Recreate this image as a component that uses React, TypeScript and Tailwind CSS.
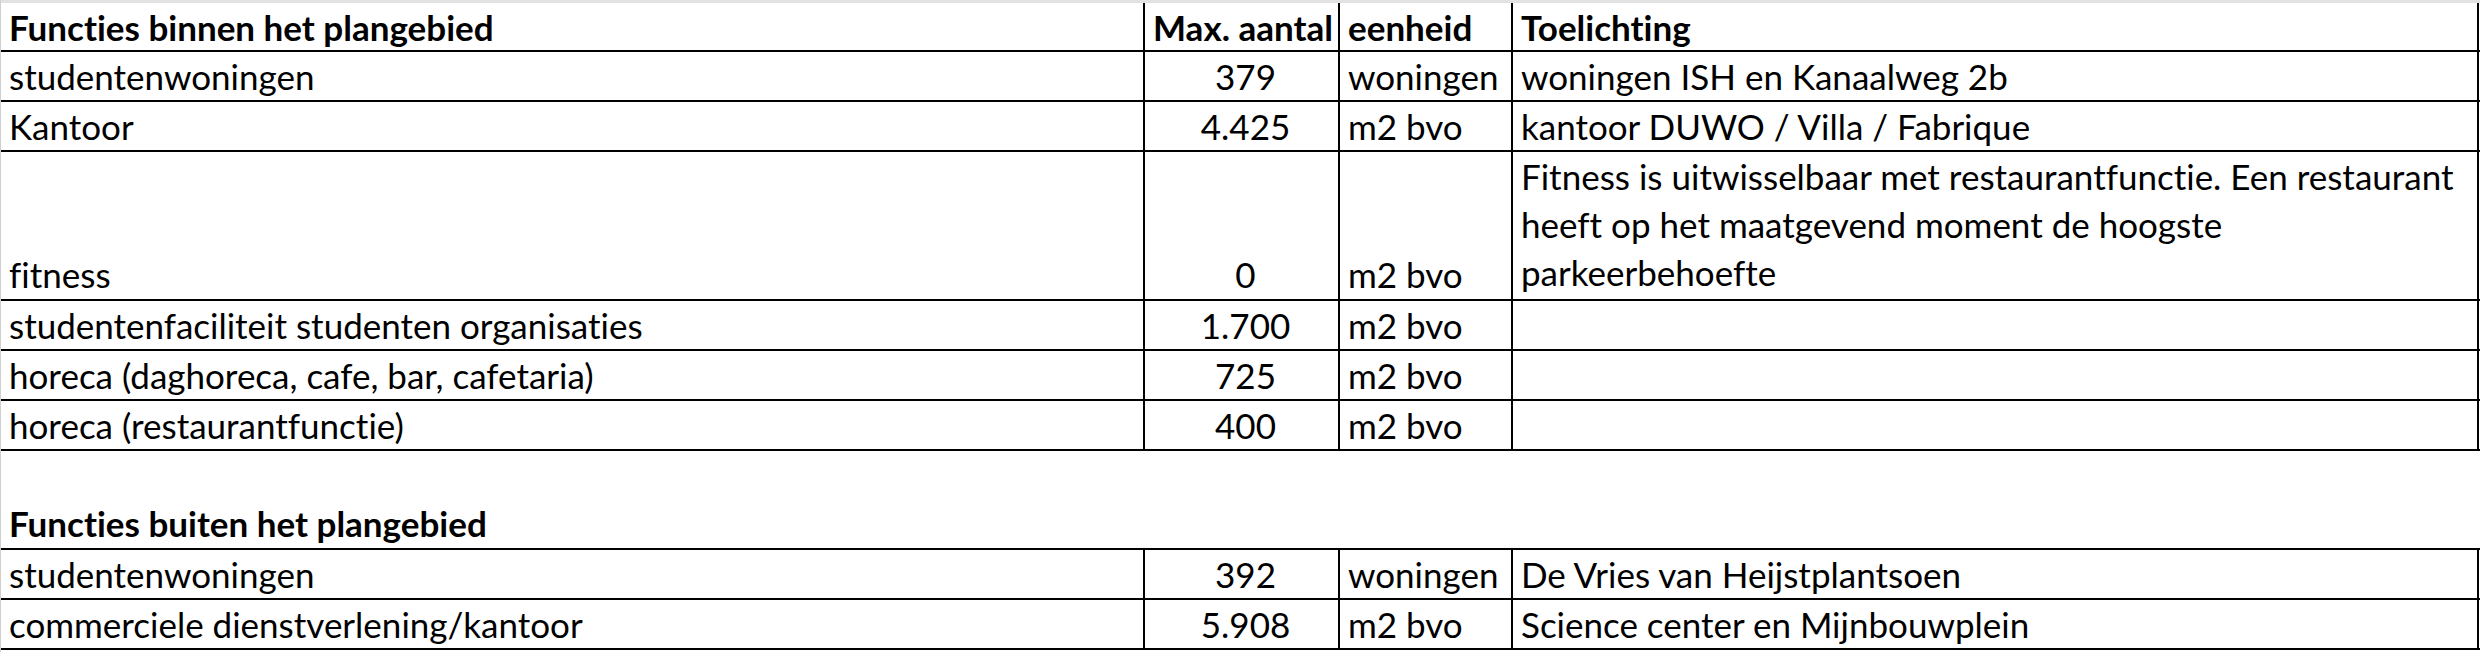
import React from "react";

type RowData = {
  name: string;
  max: string;
  unit: string;
  note?: string[];
  tall?: boolean;
};

const binnen: RowData[] = [
  { name: "studentenwoningen", max: "379", unit: "woningen", note: ["woningen ISH en Kanaalweg 2b"] },
  { name: "Kantoor", max: "4.425", unit: "m2 bvo", note: ["kantoor DUWO / Villa / Fabrique"] },
  {
    name: "fitness",
    max: "0",
    unit: "m2 bvo",
    tall: true,
    note: [
      "Fitness is uitwisselbaar met restaurantfunctie. Een restaurant",
      "heeft op het maatgevend moment de hoogste",
      "parkeerbehoefte",
    ],
  },
  { name: "studentenfaciliteit studenten organisaties", max: "1.700", unit: "m2 bvo" },
  { name: "horeca (daghoreca, cafe, bar, cafetaria)", max: "725", unit: "m2 bvo" },
  { name: "horeca (restaurantfunctie)", max: "400", unit: "m2 bvo" },
];

const buiten: RowData[] = [
  { name: "studentenwoningen", max: "392", unit: "woningen", note: ["De Vries van Heijstplantsoen"] },
  { name: "commerciele dienstverlening/kantoor", max: "5.908", unit: "m2 bvo", note: ["Science center en Mijnbouwplein"] },
];

const grid = "grid grid-cols-[1144px_195px_173px_966px] border-b-2 border-black";
const cell = "border-r-2 border-black flex flex-col justify-end pl-[8px] pb-[1px] whitespace-nowrap";

function Row({ r }: { r: RowData }) {
  return (
    <div className={`${grid} ${r.tall ? "h-[149px]" : "h-[50px]"}`}>
      <div className={cell}>{r.name}</div>
      <div className={`${cell} items-center pl-0`}>{r.max}</div>
      <div className={cell}>{r.unit}</div>
      <div className={`${cell} ${r.tall ? "justify-start" : ""}`}>
        {(r.note ?? []).map((n) => (
          <span key={n}>{n}</span>
        ))}
      </div>
    </div>
  );
}

export default function App() {
  return (
    <div className="w-[2480px] h-[652px] bg-white text-black font-[Lato,sans-serif] text-[35px] leading-[48px] [font-variant-ligatures:none] border-l border-[#cfcfcf] overflow-hidden">
      <div className="h-[3px] bg-[#e2e2e2]" />
      <div className={`${grid} h-[49px] font-bold`}>
        <div className={cell}>Functies binnen het plangebied</div>
        <div className={`${cell} pl-[6px]`}>Max. aantal</div>
        <div className={`${cell} pl-[4px]`}>eenheid</div>
        <div className={cell}>Toelichting</div>
      </div>
      {binnen.map((r) => (
        <Row key={r.name} r={r} />
      ))}
      <div className="h-[99px] border-b-2 border-black flex flex-col justify-end pl-[8px] pb-[1px] font-bold">
        Functies buiten het plangebied
      </div>
      {buiten.map((r) => (
        <Row key={r.name} r={r} />
      ))}
    </div>
  );
}
